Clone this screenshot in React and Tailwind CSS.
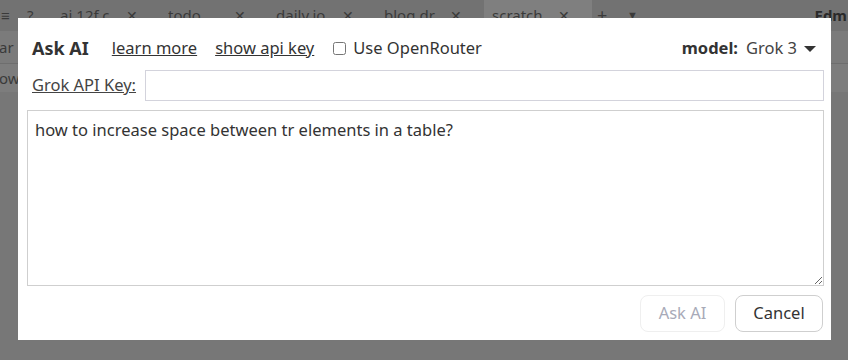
import React, { useState } from "react";

const tabs = [
  { name: "ai.12f.c", active: false },
  { name: "todo", active: false },
  { name: "daily.io", active: false },
  { name: "blog.dr", active: false },
  { name: "scratch", active: true },
];

function App() {
  const [prompt, setPrompt] = useState(
    "how to increase space between tr elements in a table?"
  );
  const [useRouter, setUseRouter] = useState(false);
  const [apiKey, setApiKey] = useState("");

  return (
    <div
      className="relative w-[848px] h-[360px] overflow-hidden bg-[#777777] text-[#333333]"
      style={{ fontFamily: '"Noto Sans", "Open Sans", sans-serif' }}
    >
      {/* app behind the dialog (dimmed) */}
      <div className="flex items-center h-[31px] bg-[#727272] text-[15px] text-[#3a3a3a]">
        <span className="w-[27px] pl-[1px]">≡</span>
        <span className="w-[25px]">?</span>
        {tabs.map((t) => (
          <div
            key={t.name}
            className={
              "flex items-center h-full w-[108px] pl-[8px] " +
              (t.active ? "bg-[#7f7f7f]" : "")
            }
          >
            <span className="w-[66px] truncate">{t.name}</span>
            <span className="text-[14px]">✕</span>
          </div>
        ))}
        <span className="ml-[5px] w-[30px] text-[18px]">+</span>
        <span className="text-[11px]">▼</span>
        <span className="ml-auto pr-[1px] font-bold text-[#2a2a2a]">Edm</span>
      </div>
      <div className="h-[33px] bg-[#7b7b7b] border-b border-[#6e6e6e] text-[15px] text-[#3a3a3a] flex items-center">
        <span className="-ml-[1px]">ar</span>
      </div>
      <div className="h-[28px] bg-[#7d7d7d] text-[15px] text-[#3a3a3a] flex items-center">
        <span className="-ml-[1px]">ow</span>
      </div>

      {/* dialog */}
      <div className="absolute left-[18px] top-[18px] w-[813px] h-[322px] bg-white pl-[9px] pr-[7px] pt-[10px] text-[16.5px]">
        <div className="flex items-center h-[40px] pl-[5px] pr-[8px]">
          <span className="text-[18px] font-bold mr-[23px]">Ask AI</span>
          <a className="underline mr-[18px] cursor-pointer">learn more</a>
          <a className="underline mr-[19px] cursor-pointer">show api key</a>
          <label className="flex items-center">
            <input
              type="checkbox"
              checked={useRouter}
              onChange={(e) => setUseRouter(e.target.checked)}
              className="w-[13px] h-[13px] mr-[7px]"
            />
            Use OpenRouter
          </label>
          <div className="ml-auto flex items-center">
            <span className="font-bold mr-[8px]">model:</span>
            <span className="text-[#444]">Grok 3</span>
            <svg width="12" height="7" viewBox="0 0 12 7" className="ml-[7px] mt-[2px]">
              <path d="M0 0 L12 0 L6 6 Z" fill="#333" />
            </svg>
          </div>
        </div>

        <div className="flex items-center h-[31px] mt-[2px] pl-[5px]">
          <span className="underline mr-[9px] text-[#444]">Grok API Key:</span>
          <input
            value={apiKey}
            onChange={(e) => setApiKey(e.target.value)}
            className="flex-1 h-[31px] border border-[#d3d3dc] outline-none px-2"
          />
        </div>

        <textarea
          value={prompt}
          onChange={(e) => setPrompt(e.target.value)}
          className="block w-full mt-[9px] h-[176px] border border-[#cfcfcf] px-[7px] pt-[7px] text-[#333] outline-none resize-y"
        />

        <div className="flex justify-end gap-[10px] mt-[9px] pr-[1px]">
          <button
            disabled
            className="w-[85px] h-[37px] rounded-[8px] border border-[#efefef] text-[#a8aab8]"
          >
            Ask AI
          </button>
          <button className="w-[88px] h-[37px] rounded-[8px] border border-[#cfcfcf] text-[#333]">
            Cancel
          </button>
        </div>
      </div>
    </div>
  );
}

export default App;
